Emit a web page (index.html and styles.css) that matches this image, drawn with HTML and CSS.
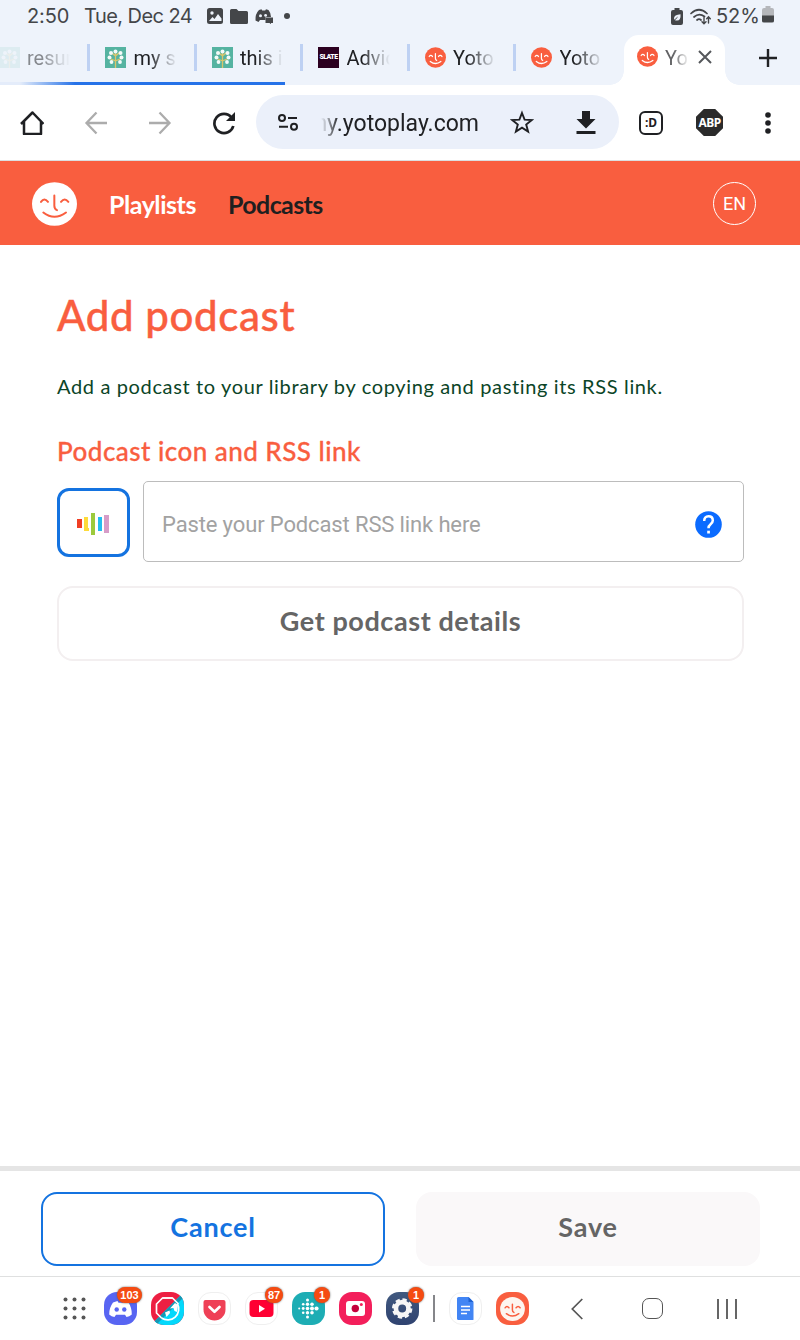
FILE: index.html
```html
<!DOCTYPE html>
<html lang="en">
<head>
<meta charset="utf-8">
<title>Add podcast</title>
<link rel="stylesheet" href="styles.css">
</head>
<body>
<svg class="defs" aria-hidden="true">
  <symbol id="face" viewBox="0 0 135 131">
    <ellipse cx="67.500" cy="65.500" rx="67.500" ry="65.500" fill="var(--disc)"/>
    <g fill="none" stroke="var(--ink)" stroke-width="var(--line)" stroke-linecap="round">
      <path d="M27 59Q37 45 48 59M87 59Q98 45 109 59M67 40V71Q67 81 75 84M34 91Q67 117 102 91"/>
    </g>
  </symbol>
  <symbol id="tree" viewBox="0 0 21 21">
    <path fill="#55b3a1" d="M0 0h21v21H0z"/>
    <path d="M10.500 21V5M10.500 14L5 11.500M10.500 14L16 11.500M10.500 9L7 6M10.500 9L14 6" stroke="#d9c66b" stroke-width="1.300" fill="none"/>
    <g fill="#f3faf8"><circle cx="10.500" cy="4.500" r="2"/><circle cx="6" cy="6" r="2"/><circle cx="15.500" cy="6" r="2"/><circle cx="4.500" cy="10.500" r="2"/><circle cx="16.500" cy="10.500" r="2"/><circle cx="6.500" cy="15" r="1.900"/><circle cx="15" cy="15" r="1.900"/></g>
  </symbol>
</svg>

<div class="status">
  <span class="clock">2:50</span>
  <span class="date">Tue, Dec 24</span>
  <svg class="st-img" width="16" height="16" viewBox="0 0 16 16"><rect width="16" height="16" rx="2.500" fill="#444649"/><circle cx="5" cy="5" r="1.700" fill="#eef3fb"/><path d="M2 13l3.500-4 2 2L11 6l3.500 4.500V13z" fill="#eef3fb"/></svg>
  <svg class="st-folder" width="18" height="15" viewBox="0 0 18 15"><path d="M1.500 0h5l2 2H16.500Q18 2 18 3.500v10Q18 15 16.500 15h-15Q0 15 0 13.500v-12Q0 0 1.500 0z" fill="#444649"/></svg>
  <svg class="st-disc" width="18" height="15" viewBox="0 0 18 15"><path d="M4 1l2.500-.800.700 1.300h3L11 .200 13.500 1Q16 4 16 8h-5.500v3H5L3.500 13 .500 11.500Q0 5 4 1z" fill="#444649"/><circle cx="5.500" cy="6.800" r="1.500" fill="#eef3fb"/><circle cx="10.600" cy="6.400" r="1.400" fill="#eef3fb"/><path d="M10.500 8.500H18V14h-2v1.200L14.500 14h-4z" fill="#444649"/></svg>
  <i class="st-dot"></i>
  <svg class="st-save" width="12" height="17" viewBox="0 0 12 17"><path d="M3.500 0h5v2H10q2 0 2 2v11q0 2-2 2H2q-2 0-2-2V4q0-2 2-2h1.500z" fill="#444649"/><path d="M9.500 6.200q.500 6.300-3.500 6.300-3 0-3-2.300 0-3.500 6.500-4z" fill="#eef3fb"/><path d="M2 13.500l4.500-4.300" stroke="#444649" stroke-width="1"/></svg>
  <svg class="st-wifi" width="21" height="17" viewBox="0 0 21 17"><g fill="none" stroke="#444649" stroke-width="1.700" stroke-linecap="round"><path d="M1 5.500Q9 -2 17 5.500M4 9Q9 4.500 14.500 8.500M7 12Q9 10.300 11 12"/><path d="M14 9.500v6M12 13.700l2 2 2-2M18.500 15V9M16.700 10.700l1.800-1.900 1.800 1.900" stroke-width="1.400"/></g></svg>
  <span class="pct">52%</span>
  <svg class="st-batt" width="12" height="17" viewBox="0 0 12 17"><path d="M3.500 0h5v2H10q2 0 2 2v6H0V4q0-2 2-2h1.500z" fill="#b5b7bb"/><path d="M0 9.500h12V15q0 1.500-2 1.500H2Q0 16.500 0 15z" fill="#444649"/></svg>
</div>

<div class="tabs">
  <div class="tab dim"><svg width="21" height="21"><use href="#tree"/></svg><span>resur</span></div>
  <div class="tab"><svg width="21" height="21"><use href="#tree"/></svg><span>my s</span></div>
  <div class="tab"><svg width="21" height="21"><use href="#tree"/></svg><span>this i</span></div>
  <div class="tab"><b class="slate">SLATE</b><span>Advic</span></div>
  <div class="tab"><svg class="mini" width="21" height="21"><use href="#face"/></svg><span>Yoto</span></div>
  <div class="tab"><svg class="mini" width="21" height="21"><use href="#face"/></svg><span>Yoto</span></div>
  <div class="tab-active">
    <svg class="mini" width="21" height="21"><use href="#face"/></svg><span>Yo</span>
    <svg class="close" width="14" height="14" viewBox="0 0 14 14"><path d="M1 1l12 12M13 1L1 13" stroke="#55575b" stroke-width="2"/></svg>
  </div>
  <svg class="plus" width="18" height="18" viewBox="0 0 18 18"><path d="M9 0v18M0 9h18" stroke="#202124" stroke-width="2.400"/></svg>
  <i class="progress"></i>
</div>

<div class="toolbar">
  <svg width="24" height="24" viewBox="0 0 24 24"><path d="M1 13L12.500 1.500l11 11.500M4 10.500V23h17V10.500" fill="none" stroke="#1f2023" stroke-width="2.500" stroke-linejoin="round"/></svg>
  <svg width="24" height="24" viewBox="0 0 24 24"><path d="M12.500 1.500L2.500 12l10 10.500M2.500 12H23" fill="none" stroke="#acacac" stroke-width="2.300"/></svg>
  <svg width="24" height="24" viewBox="0 0 24 24"><path d="M11.500 1.500L21.500 12l-10 10.500M21.500 12H1" fill="none" stroke="#acacac" stroke-width="2.300"/></svg>
  <svg width="24" height="24" viewBox="0 0 24 24"><path d="M19.500 6.500A9.600 9.600 0 1 0 21.300 15" fill="none" stroke="#1f2023" stroke-width="2.700"/><path d="M23 1v9h-9z" fill="#1f2023"/></svg>
  <div class="omnibox">
    <svg class="tune" width="20" height="17" viewBox="0 0 20 17"><g fill="none" stroke="#1f2023" stroke-width="2"><circle cx="4" cy="4" r="3"/><circle cx="16" cy="12.700" r="3"/><path d="M10 4h9M1 12.700h9"/></g></svg>
    <span class="url">ny.yotoplay.com</span>
    <svg class="star" width="24" height="24" viewBox="0 0 24 24"><path d="M12 3l2.600 6.700 7.200.400-5.600 4.500 1.900 7L12 17.700l-6.100 3.900 1.900-7-5.600-4.500 7.200-.400z" fill="none" stroke="#1f2023" stroke-width="1.900"/></svg>
    <svg width="20" height="24" viewBox="0 0 20 24"><path d="M6 1h8v8h5.500L10 18.500.500 9H6zM.500 21h19v3H.500z" fill="#1f2023"/></svg>
  </div>
  <b class="smile">:D</b>
  <b class="abp">ABP</b>
  <svg class="dots" width="24" height="24" viewBox="0 0 24 24"><g fill="#1f2023"><circle cx="12" cy="4" r="2.800"/><circle cx="12" cy="12" r="2.800"/><circle cx="12" cy="20" r="2.800"/></g></svg>
</div>

<header class="site-header">
  <svg class="logo" width="45" height="44"><use href="#face"/></svg>
  <a class="link playlists">Playlists</a>
  <a class="link podcasts">Podcasts</a>
  <span class="lang">EN</span>
</header>

<main>
  <h1>Add podcast</h1>
  <p>Add a podcast to your library by copying and pasting its RSS link.</p>
  <h2>Podcast icon and RSS link</h2>
  <div class="row">
    <div class="icon-box"><svg width="33" height="23" viewBox="0 0 33 23"><path fill="#f03e24" d="M0 6h5v9H0z"/><path fill="#fddb3a" d="M7 4h4v11h1v3H7z"/><path fill="#9cca3c" d="M14 0h4v22h-4z"/><path fill="#22bdf0" d="M21 4h4v14h-4z"/><path fill="#d69cc8" d="M27 2h5v18h-5z"/></svg></div>
    <div class="field"><span>Paste your Podcast RSS link here</span>
      <svg width="27" height="27" viewBox="0 0 27 27"><circle cx="13.500" cy="13.500" r="13.300" fill="#0b6bff"/><path d="M9.200 10q0-4.700 4.300-4.700t4.300 4.200q0 2-2.200 3.700-2.100 1.600-2.100 4.100" fill="none" stroke="#fff" stroke-width="2.500"/><path d="M12.200 19.700h2.700v2.800h-2.700z" fill="#fff"/></svg>
    </div>
  </div>
  <div class="details">Get podcast details</div>
</main>

<footer class="actions">
  <div class="btn cancel">Cancel</div>
  <div class="btn save">Save</div>
</footer>

<nav class="dock">
  <svg class="grid" width="23" height="23" viewBox="0 0 23 23"><g fill="#555"><circle cx="2.500" cy="2.500" r="2"/><circle cx="11.500" cy="2.500" r="2"/><circle cx="20.500" cy="2.500" r="2"/><circle cx="2.500" cy="11.500" r="2"/><circle cx="11.500" cy="11.500" r="2"/><circle cx="20.500" cy="11.500" r="2"/><circle cx="2.500" cy="20.500" r="2"/><circle cx="11.500" cy="20.500" r="2"/><circle cx="20.500" cy="20.500" r="2"/></g></svg>
  <div class="app discord"><svg viewBox="0 0 33 33"><path d="M9 10.500l4.500-1.500 1 1.800h4.500l1-1.800 4.500 1.500Q28 16 27.800 22.500q-2.500 2-5.300 2.500l-1.500-2.200h-9L10.500 25q-3-.500-5.300-2.500Q5 16 9 10.500z" fill="#fff"/><circle cx="12.700" cy="17.500" r="2.200" fill="#5865f2"/><circle cx="20.300" cy="17.500" r="2.200" fill="#5865f2"/></svg><em class="wide">103</em></div>
  <div class="app adblock"><svg viewBox="0 0 33 33"><path d="M33 0v33H0z" fill="#03d8fb"/><path d="M33 0v5L5 33H0z" fill="#1698b3"/><path d="M11.500 6h10l6 6" fill="none" stroke="#fff" stroke-width="1.700"/><path d="M21.500 6h-10l-6 6v9l5 5" fill="none" stroke="#fff" stroke-width="1.700"/><path d="M26.300 11.500A11 11 0 0 1 10.500 26" fill="none" stroke="#fff" stroke-width="1.700"/><path d="M24 11l3 2-1 7-2.500-1-1-3-3.500.500zM14 20.500l4.500-2 .500 2.500-3.500 4z" fill="#fff"/></svg></div>
  <div class="app plain"><svg viewBox="0 0 33 33"><path d="M7.500 8h18q2 0 2 2v7.500a11 11 0 0 1-22 0V10q0-2 2-2z" fill="#ef4056"/><path d="M11.500 15l5 4.800 5-4.800" fill="none" stroke="#fff" stroke-width="2.700" stroke-linecap="round" stroke-linejoin="round"/></svg></div>
  <div class="app plain"><svg viewBox="0 0 33 33"><rect x="4.500" y="8" width="24" height="17" rx="4" fill="#ff0033"/><path d="M14 13v7.500l6-3.700z" fill="#fff"/></svg><em class="mid">87</em></div>
  <div class="app fitbit"><svg viewBox="0 0 33 33"><g fill="#fff"><circle cx="15.500" cy="8" r="1.500"/><circle cx="15.500" cy="12.200" r="1.700"/><circle cx="15.500" cy="16.500" r="1.800"/><circle cx="15.500" cy="20.800" r="1.700"/><circle cx="15.500" cy="25" r="1.500"/><circle cx="11.200" cy="12.200" r="1.300"/><circle cx="11.200" cy="16.500" r="1.400"/><circle cx="11.200" cy="20.800" r="1.300"/><circle cx="7.200" cy="16.500" r="1"/><circle cx="20" cy="12.200" r="1.800"/><circle cx="20" cy="16.500" r="2"/><circle cx="20" cy="20.800" r="1.800"/><circle cx="24.500" cy="16.500" r="2.100"/></g></svg><em>1</em></div>
  <div class="app camera"><svg viewBox="0 0 33 33"><rect x="7" y="9" width="19" height="15" rx="3" fill="#fff"/><circle cx="16.300" cy="16.500" r="3.700" fill="#c4003c"/><circle cx="22.300" cy="12.500" r="1.500" fill="#f31f5b"/></svg></div>
  <div class="app settings"><svg viewBox="0 0 33 33"><circle cx="16.200" cy="16.500" r="8.700" fill="none" stroke="#f6f6f6" stroke-width="3" stroke-dasharray="4.200 2.633"/><circle cx="16.200" cy="16.500" r="6.300" fill="none" stroke="#f6f6f6" stroke-width="4.700"/></svg><em>1</em></div>
  <i class="divider"></i>
  <div class="app plain"><svg viewBox="0 0 33 33"><path d="M9.500 5h10L24.500 10v17.500q0 .500-1 .500h-14q-1.500 0-1.500-1.500v-20Q8 5 9.500 5z" fill="#4285f4"/><path d="M19.500 5v5h5z" fill="#1f62d0"/><path d="M12 14.500h9M12 18h9M12 21.500h6" stroke="#fff" stroke-width="1.600"/></svg></div>
  <div class="app yoto"><svg class="appface" width="25" height="24"><use href="#face"/></svg></div>
  <svg class="back" width="12" height="22" viewBox="0 0 12 22"><path d="M11.300 1L1.300 11l10 10" fill="none" stroke="#555" stroke-width="1.700"/></svg>
  <i class="home"></i>
  <i class="recents"></i>
</nav>
</body>
</html>
```
FILE: styles.css
```css
* { box-sizing: border-box; }
body {
  margin: 0;
  width: 800px;
  height: 1340px;
  overflow: hidden;
  display: flex;
  flex-direction: column;
  background: #fff;
  font-family: Lato, "Open Sans", sans-serif;
}
svg { flex: none; display: block; }
.defs { position: absolute; width: 0; height: 0; }

.status {
  height: 32px;
  flex: none;
  background: #eef3fb;
  display: flex;
  align-items: center;
  padding-left: 27px;
  color: #444649;
  font: 20px/32px Inter, sans-serif;
  white-space: nowrap;
}
.clock { width: 57px; letter-spacing: -0.100px; }
.date { width: 123px; letter-spacing: -0.550px; }
.st-folder { margin-left: 7px; }
.st-disc { margin-left: 7px; margin-right: -1px; }
.st-dot { width: 6px; height: 6px; border-radius: 50%; background: #444649; margin-left: 12px; }
.st-save { margin-left: 381px; }
.st-wifi { margin-left: 7px; }
.pct { width: 46px; margin-left: 5px; letter-spacing: -0.100px; }
.st-batt { margin-top: -3px; }

.tabs {
  position: relative;
  height: 53px;
  flex: none;
  background: #eef3fb;
  display: flex;
  overflow: hidden;
  font: 20px/24px Roboto, sans-serif;
  color: #202124;
}
.tab {
  width: 106.500px;
  flex: none;
  height: 27px;
  margin-top: 12px;
  border-left: 3px solid #bed1f3;
  padding-left: 15px;
  display: flex;
  align-items: center;
}
.tab:first-child { margin-left: -19.500px; }
.tab span, .tab-active span {
  width: 43px;
  margin-left: 7.500px;
  padding-top: 1px;
  white-space: nowrap;
  mask-image: linear-gradient(90deg, #000 35%, transparent);
}
.dim svg { opacity: .1; }
.dim span { opacity: .5; }
.mini { --disc: #f95e3f; --ink: #fff; --line: 8; }
.slate {
  width: 21px;
  height: 21px;
  background: #2c0020;
  color: #fff;
  font: 900 7px/21px Roboto, sans-serif;
  letter-spacing: -0.600px;
  text-align: center;
}
.tab-active {
  position: relative;
  width: 101px;
  flex: none;
  height: 50px;
  margin: 3px 0 0 4.500px;
  padding: 11px 0 0 13px;
  background: #fff;
  border-radius: 15px 15px 0 0;
  display: flex;
  align-items: flex-start;
}
.tab-active::before, .tab-active::after {
  content: "";
  position: absolute;
  bottom: 0;
  width: 14px;
  height: 14px;
}
.tab-active::before { left: -14px; background: radial-gradient(circle at 0 0, transparent 13.500px, #fff 14px); }
.tab-active::after { right: -14px; background: radial-gradient(circle at 100% 0, transparent 13.500px, #fff 14px); }
.tab-active span { width: 24px; margin-left: 7px; padding: 0; opacity: .7; }
.tab-active .close { margin: 4px 0 0 8.500px; }
.plus { margin: 17px 0 0 34px; }
.progress {
  position: absolute;
  left: 0;
  bottom: 0;
  width: 285px;
  height: 3px;
  background: linear-gradient(90deg, #e4ecfa 20px, #2672e8 75px);
}

.toolbar {
  height: 76px;
  flex: none;
  border-bottom: 1px solid #dcdfe0;
  padding: 0 20px;
  display: flex;
  align-items: center;
  gap: 40px;
}
.omnibox {
  width: 363px;
  height: 54px;
  margin: -1px -20px 0;
  flex: none;
  border-radius: 27px;
  background: #ebf0fa;
  padding: 0 23px 0 22px;
  display: flex;
  align-items: center;
}
.url {
  width: 158px;
  margin-left: 23px;
  padding-top: 4px;
  display: flex;
  justify-content: flex-end;
  font: 23px/30px Roboto, sans-serif;
  color: #202124;
  mask-image: linear-gradient(90deg, transparent, #000 18px);
}
.star { margin: 0 42px 0 31px; }
.smile {
  width: 24px;
  height: 24px;
  flex: none;
  border: 2.500px solid #1f2023;
  border-radius: 6px;
  font: 700 12px/19px "Noto Sans", sans-serif;
  text-align: center;
  color: #1f2023;
}
.abp {
  width: 27px;
  height: 27px;
  flex: none;
  margin: 0 -7px;
  background: #2b2b2b;
  clip-path: polygon(29% 0, 71% 0, 100% 29%, 100% 71%, 71% 100%, 29% 100%, 0 71%, 0 29%);
  color: #fff;
  font: 700 12px/27px "Noto Sans", sans-serif;
  letter-spacing: -0.500px;
  text-align: center;
}

.site-header {
  height: 84px;
  flex: none;
  background: #f95e3f;
  display: flex;
  align-items: center;
  padding: 0 44px 0 32px;
}
.logo { --disc: #fff; --ink: #f95e3f; --line: 6; margin-top: 2px; }
.link { font-size: 25px; line-height: 30px; font-weight: 700; margin-top: 2px; }
.playlists { width: 87px; margin-left: 32px; color: #fff; letter-spacing: -0.450px; }
.podcasts { margin-left: 32px; color: #1f1f1f; letter-spacing: -0.600px; }
.lang {
  width: 43px;
  height: 43px;
  margin-left: auto;
  border: 1.500px solid #fff;
  border-radius: 50%;
  color: #fff;
  font: 18px/41px Roboto, sans-serif;
  text-align: center;
}

main { flex: 1; padding: 45px 56px 0 57px; }
h1 { margin: 0; font-size: 42px; line-height: 50px; font-weight: 500; color: #f95e3f; letter-spacing: .600px; -webkit-text-stroke: .4px #f95e3f; }
p { margin: 31px 0 0; font-size: 20px; line-height: 30px; color: #0b4527; letter-spacing: .640px; white-space: nowrap; }
h2 { margin: 33px 0 0; font-size: 26px; line-height: 34px; font-weight: 500; color: #f95e3f; letter-spacing: .470px; -webkit-text-stroke: .3px #f95e3f; }
.row { display: flex; gap: 13px; margin-top: 13px; align-items: flex-start; }
.icon-box {
  width: 73px;
  height: 69px;
  margin-top: 7px;
  flex: none;
  border: 3px solid #1473e0;
  border-radius: 12px;
  padding: 22px 17px;
}
.field {
  flex: 1;
  height: 81px;
  border: 1px solid #bcbcbc;
  border-radius: 5px;
  padding: 6px 21px 0 18px;
  display: flex;
  align-items: center;
  justify-content: space-between;
  color: #a2a2a2;
  font: 22px/30px Roboto, sans-serif;
  letter-spacing: -0.130px;
}
.details {
  height: 75px;
  margin-top: 24px;
  border: 2px solid #f3eff0;
  border-radius: 16px;
  text-align: center;
  color: #656565;
  font-size: 27px;
  line-height: 65px;
  font-weight: 700;
  letter-spacing: .580px;
}

.actions {
  height: 110px;
  flex: none;
  border-top: 5px solid #e5e5e5;
  padding: 21px 40px 0 41px;
  display: flex;
  gap: 31px;
}
.btn { width: 344px; height: 74px; border-radius: 16px; text-align: center; font-size: 27px; line-height: 70px; font-weight: 700; letter-spacing: .800px; }
.cancel { border: 2px solid #1473e0; color: #1473e0; line-height: 66px; }
.save { background: #faf8f9; color: #656565; }

.dock {
  height: 64px;
  flex: none;
  border-top: 1px solid #dfe0e0;
  padding-left: 63px;
  display: flex;
  align-items: center;
  gap: 14px;
}
.grid { margin-right: 4px; }
.app { position: relative; width: 33px; height: 33px; flex: none; border-radius: 13px; }
.app svg { border-radius: 13px; }
.app em {
  position: absolute;
  right: -5px;
  top: -5px;
  width: 16px;
  height: 16px;
  border-radius: 8px;
  background: #f54b12;
  box-shadow: 0 0 2px #555;
  color: #fff;
  font: 700 11px/16px "Liberation Sans", sans-serif;
  text-align: center;
}
.app em.wide { width: 25px; }
.app em.mid { width: 18px; top: -6px; right: -6px; }
.discord { background: #5865f2; }
.adblock { background: #ed1f42; }
.plain { background: #fff; border: 1px solid #efefef; }
.plain svg { margin: -1px; width: 33px; height: 33px; }
.fitbit { background: #1dadb4; }
.camera { background: #f31f5b; }
.settings { background: linear-gradient(#41597f, #2f4370); }
.yoto { background: #f95e3f; padding: 4.500px 4px; }
.app .appface { --disc: #fdf5f0; --ink: #f95e3f; --line: 8; border-radius: 0; }
.divider { width: 1.500px; margin-right: .500px; height: 27px; background: #85868a; }
.back { margin-left: 28px; }
.home { width: 21px; height: 21px; border: 1.800px solid #555; border-radius: 7px; margin-left: 45px; }
.recents { width: 20px; height: 20px; margin-left: 40px; background: linear-gradient(90deg, #666 2px, transparent 2px 9px, #666 9px 11px, transparent 11px 18px, #666 18px); }
```
